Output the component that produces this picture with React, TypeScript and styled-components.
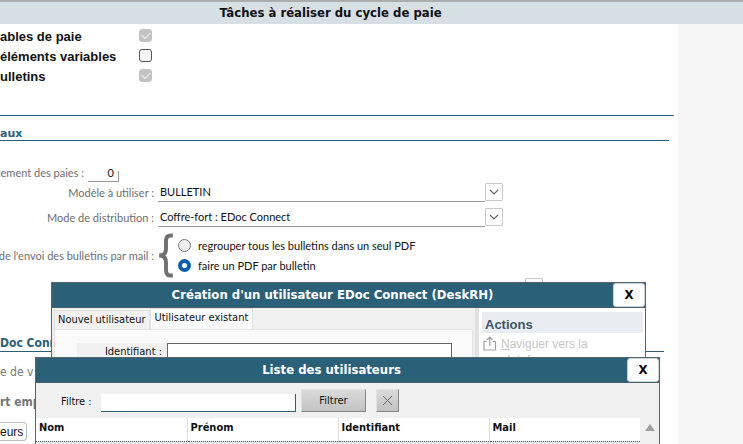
import React from 'react';
import styled, { createGlobalStyle } from 'styled-components';

const TAHOMA = '"DejaVu Sans Condensed", "Noto Sans", sans-serif';
const ARIAL = '"Liberation Sans", Arial, sans-serif';
const FORM = '"Lato", "Liberation Sans", sans-serif';
const TEAL = '#2b6079';

const GlobalStyle = createGlobalStyle`
  * { box-sizing: border-box; }
  html, body { margin: 0; overflow: hidden; background: #f5f5f5; }
  body { font: 12px/16px ${ARIAL}; color: #111; }
  button, input, select { font: inherit; color: inherit; margin: 0; padding: 0; border-radius: 0; }
`;

const Page = styled.div`
  position: relative;
  min-height: 100vh;
  overflow: hidden;
`;

const PageHeader = styled.header`
  border-top: 2px solid #aaadae;
  background: #d6dfe4;
  height: 24px;
  padding: 0 82px 0 0;
  text-align: center;
  h1 { margin: 0; font: bold 13px/22px ${TAHOMA}; }
`;

const Main = styled.main`
  display: flex;
  flex-direction: column;
  min-height: calc(100vh - 24px);
  margin-right: 65px;
  padding-top: 1px;
  background: #fff;
`;

const CheckList = styled.div`
  display: flex;
  flex-direction: column;
  padding-bottom: 30px;
`;

const CheckRow = styled.label`
  display: grid;
  grid-template-columns: 139px 13px;
  align-items: center;
  height: 20px;
  font: bold 13px/16px ${ARIAL};
  span { padding-top: 4px; }
`;

const CheckBox = styled.input`
  appearance: none;
  display: grid;
  place-items: center;
  width: 13px;
  height: 13px;
  border: 1px solid #555;
  border-radius: 3px;
  background: #f5f5f5;
  &:checked { border-color: #c2c2c2; background: #c2c2c2; }
  &:checked::after {
    content: '';
    width: 7px;
    height: 4px;
    border: solid #f4f4f4;
    border-width: 0 0 1px 1px;
    transform: rotate(-45deg);
    margin-bottom: 2px;
  }
`;

const Rule = styled.hr`
  width: calc(100% - 4px);
  height: 1px;
  margin: 0;
  border: 0;
  background: ${TEAL};
`;

const SectionTitle = styled.h2<{ $inset: number; $large?: boolean }>`
  margin: 0 ${p => p.$inset}px 0 0;
  border-bottom: 1px solid ${TEAL};
  color: ${TEAL};
  font: bold ${p => (p.$large ? '12px/16px' : '11px/12px')} ${p => (p.$large ? TAHOMA : '"DejaVu Sans", sans-serif')};
`;

const TitleBlock = styled.div`
  padding-top: 12px;
`;

const Form = styled.form`
  display: flex;
  flex-direction: column;
  padding-top: 22px;
  font: 11px/16px ${FORM};
`;

const FormRow = styled.div<{ $label: number; $height: number; $lead?: number }>`
  display: grid;
  grid-template-columns: ${p => p.$label}px minmax(0, 345px);
  column-gap: 4px;
  align-items: center;
  height: ${p => p.$height}px;
  padding-top: ${p => p.$lead ?? 0}px;
  color: #111;
`;

const FieldLabel = styled.label`
  color: #6d6d6d;
  text-align: right;
  white-space: nowrap;
  justify-self: end;
`;

const CountInput = styled.input`
  width: 31px;
  height: 19px;
  padding-right: 5px;
  border: 0;
  border-bottom: 1px solid #999;
  background: linear-gradient(#999, #999) right bottom / 1px 10px no-repeat;
  text-align: right;
`;

const Combo = styled.div`
  display: grid;
  grid-template-columns: 1fr 18px;
  align-items: start;
  height: 19px;
`;

const Select = styled.select`
  appearance: none;
  height: 19px;
  padding-left: 2px;
  border: 0;
  border-bottom: 1px solid #999;
  background: #fff;
`;

const DropButton = styled.button`
  display: grid;
  place-items: center;
  width: 18px;
  height: 18px;
  border: 1px solid #c9c9c9;
  border-radius: 1px;
  background: #fcfcfc;
`;

const RadioBlock = styled.fieldset`
  display: grid;
  grid-template-columns: 16px 1fr;
  column-gap: 4px;
  align-items: center;
  margin: 0;
  padding: 0;
  border: 0;
`;

const RadioOption = styled.label`
  display: flex;
  align-items: center;
  gap: 7px;
  height: 20px;
  white-space: nowrap;
`;

const Radio = styled.input`
  appearance: none;
  width: 13px;
  height: 13px;
  border: 1px solid #777;
  border-radius: 50%;
  background: #efefef;
  &:checked { border: 4px solid #0a5fae; background: #fff; }
`;

const PickerRow = styled.div`
  height: 57px;
  padding-left: 525px;
`;

const Details = styled.div`
  display: flex;
  flex-direction: column;
  align-items: flex-start;
  padding-top: 10px;
  gap: 10px;
  font: 12px/20px ${TAHOMA};
  color: #777;
`;

const UsersButton = styled.button`
  width: 27px;
  height: 19px;
  border: 1px solid #bbb;
  border-left: 0;
  border-radius: 0 4px 4px 0;
  background: #fff;
  color: #111;
  font: 12px/16px ${ARIAL};
  text-align: left;
`;

const Window = styled.section<{ $top: number; $left: number; $width: number }>`
  position: absolute;
  top: ${p => p.$top}px;
  bottom: 0;
  left: ${p => p.$left}px;
  display: flex;
  flex-direction: column;
  width: ${p => p.$width}px;
  border: 1px solid #59646a;
  border-bottom: 0;
  background: #f0f0f0;
  overflow: hidden;
`;

const TitleBar = styled.header`
  display: flex;
  flex: none;
  align-items: center;
  height: 25px;
  border-bottom: 1px solid #4a5e68;
  background: ${TEAL};
  color: #fff;
  h2 { flex: 1; margin: 0; text-align: center; font: bold 13px/24px ${TAHOMA}; }
`;

const CloseButton = styled.button`
  width: 32px;
  height: 24px;
  border: 1px solid #c6d5dc;
  border-radius: 3px;
  background: #fdfdfd;
  color: #000;
  font: bold 13px/20px ${TAHOMA};
`;

const CreateBody = styled.div`
  display: grid;
  grid-template-columns: minmax(0, 1fr) 4px 166px;
  flex: 1;
`;

const TabArea = styled.div`
  display: flex;
  flex-direction: column;
  padding: 0 2px;
`;

const Tabs = styled.div`
  display: flex;
  align-items: flex-end;
  height: 21px;
`;

const Tab = styled.button<{ $active?: boolean }>`
  height: ${p => (p.$active ? 21 : 19)}px;
  padding: 0 ${p => (p.$active ? 4 : 3)}px ${p => (p.$active ? 2 : 0)}px;
  border: 1px solid #e2e2e2;
  border-bottom: 0;
  background: ${p => (p.$active ? '#fafafa' : '#f1f1f1')};
  font: 11px/16px ${TAHOMA};
  white-space: nowrap;
`;

const TabPanel = styled.div`
  flex: 1;
  padding: 13px 20px 0 22px;
  border: 1px solid #e2e2e2;
  background: #fafafa;
`;

const IdentifierRow = styled.div`
  display: grid;
  grid-template-columns: 90px 1fr;
  height: 20px;
  label { padding-right: 5px; background: #f0f0f0; font: 11px/18px ${TAHOMA}; text-align: right; }
  input { min-width: 0; border: 1px solid #666; background: #fff; }
`;

const Splitter = styled.div`
  background: #e1e1e1;
`;

const ActionsPanel = styled.aside`
  padding: 4px 2px 0 3px;
  background: #fff;
  h3 { margin: 0; padding: 3px 3px 0; height: 21px; background: #e9edf1; color: #3e5565; font: bold 13px/19px ${ARIAL}; }
`;

const ActionLink = styled.a`
  display: grid;
  grid-template-columns: 14px 1fr;
  gap: 4px;
  padding: 3px 1px;
  color: #c4c4c4;
  font: 12px/16px ${ARIAL};
  text-decoration: none;
`;

const FilterRow = styled.form`
  display: flex;
  flex: none;
  align-items: center;
  height: 35px;
  padding-left: 25px;
  font: 11px/16px ${TAHOMA};
  label { width: 40px; padding-top: 3px; }
`;

const FilterInput = styled.input`
  width: 195px;
  height: 18px;
  margin: 4px 5px 0 0;
  border: 0;
  border-right: 1px solid ${TEAL};
  border-bottom: 1px solid ${TEAL};
  background: #fff;
`;

const RaisedButton = styled.button<{ $width: number }>`
  display: grid;
  place-items: center;
  width: ${p => p.$width}px;
  height: 23px;
  margin: 0 10px 0 0;
  border: 1px solid #e0e0e0;
  border-right-color: #858585;
  border-bottom-color: #858585;
  background: linear-gradient(#dadada, #c2c2c2);
  font: 11px/16px ${TAHOMA};
`;

const ListArea = styled.div`
  display: grid;
  flex: none;
  grid-template-columns: 1fr 19px;
`;

const Table = styled.table`
  width: 100%;
  table-layout: fixed;
  border-collapse: collapse;
  th {
    height: 23px;
    padding: 0 3px 2px;
    border-right: 1px solid #ddd;
    border-bottom: 1px dotted #555;
    background: #fff;
    font: bold 11px/16px ${TAHOMA};
    text-align: left;
  }
  th:last-child { border-right: 0; }
  td { height: 20px; background: #dfe6e9; }
`;

const ScrollColumn = styled.div`
  display: flex;
  justify-content: center;
  padding-top: 6px;
`;

const Chevron = () => (
  <svg width="10" height="6" viewBox="0 0 10 6" fill="none" stroke="#666" strokeWidth="1.2">
    <path d="M1 1l4 4 4-4" />
  </svg>
);

const Brace = () => (
  <svg width="16" height="45" viewBox="0 0 16 46" fill="none" stroke="#707070" strokeWidth="4">
    <path d="M15 2.500H13Q8 2.500 8 8V16Q8 23 1 23Q8 23 8 30V38Q8 43.500 13 43.500H15" />
  </svg>
);

const ShareIcon = () => (
  <svg width="14" height="15" viewBox="0 0 14 15" fill="none" stroke="#a3a3a3" strokeWidth="1.2">
    <path d="M4 5.500H1V14H12.500V5.500H9.500M6.750 10V1.500M3.800 4L6.750 1.200 9.700 4" />
  </svg>
);

const checks = [
  { label: 'ables de paie', done: true },
  { label: 'éléments variables', done: false },
  { label: 'ulletins', done: true },
];

const columns = ['Nom', 'Prénom', 'Identifiant', 'Mail'];

function ComboField({ id, label, value }: { id: string; label: string; value: string }) {
  return (
    <FormRow $label={154} $height={25}>
      <FieldLabel htmlFor={id}>{label}</FieldLabel>
      <Combo>
        <Select id={id} defaultValue={value}><option>{value}</option></Select>
        <DropButton type="button" aria-label={label}><Chevron /></DropButton>
      </Combo>
    </FormRow>
  );
}

export default function App() {
  return (
    <Page>
      <GlobalStyle />
      <PageHeader><h1>Tâches à réaliser du cycle de paie</h1></PageHeader>
      <Main>
        <CheckList>
          {checks.map(c => (
            <CheckRow key={c.label}>
              <span>{c.label}</span>
              <CheckBox type="checkbox" defaultChecked={c.done} disabled={c.done} />
            </CheckRow>
          ))}
        </CheckList>
        <Rule />
        <TitleBlock>
          <SectionTitle $inset={9}>aux</SectionTitle>
        </TitleBlock>
        <Form>
          <FormRow $label={84} $height={17}>
            <FieldLabel htmlFor="count">cement des paies :</FieldLabel>
            <CountInput id="count" defaultValue="0" />
          </FormRow>
          <ComboField id="model" label="Modèle à utiliser :" value="BULLETIN" />
          <ComboField id="mode" label="Mode de distribution :" value="Coffre-fort : EDoc Connect" />
          <FormRow $label={154} $height={48} $lead={3}>
            <FieldLabel as="span">de l'envoi des bulletins par mail :</FieldLabel>
            <RadioBlock aria-label="Envoi des bulletins par mail">
              <Brace />
              <div>
                <RadioOption><Radio type="radio" name="pdf" />regrouper tous les bulletins dans un seul PDF</RadioOption>
                <RadioOption><Radio type="radio" name="pdf" defaultChecked />faire un PDF par bulletin</RadioOption>
              </div>
            </RadioBlock>
          </FormRow>
          <PickerRow><DropButton type="button" aria-label="Choisir"><Chevron /></DropButton></PickerRow>
        </Form>
        <SectionTitle $inset={14} $large>Doc Connect</SectionTitle>
        <Details>
          <span>e de v</span>
          <strong>rt emp</strong>
          <UsersButton type="button">eurs</UsersButton>
        </Details>
      </Main>

      <Window $top={282} $left={51} $width={595}>
        <TitleBar>
          <h2>Création d'un utilisateur EDoc Connect (DeskRH)</h2>
          <CloseButton type="button">X</CloseButton>
        </TitleBar>
        <CreateBody>
          <TabArea>
            <Tabs role="tablist">
              <Tab type="button" role="tab" aria-selected={false}>Nouvel utilisateur</Tab>
              <Tab type="button" role="tab" aria-selected $active>Utilisateur existant</Tab>
            </Tabs>
            <TabPanel role="tabpanel">
              <IdentifierRow>
                <label htmlFor="identifier">Identifiant :</label>
                <input id="identifier" />
              </IdentifierRow>
            </TabPanel>
          </TabArea>
          <Splitter />
          <ActionsPanel>
            <h3>Actions</h3>
            <ActionLink href="#">
              <ShareIcon />
              <span><u>N</u>aviguer vers la<br />plateforme</span>
            </ActionLink>
          </ActionsPanel>
        </CreateBody>
      </Window>

      <Window $top={357} $left={35} $width={625}>
        <TitleBar>
          <h2>Liste des utilisateurs</h2>
          <CloseButton type="button">X</CloseButton>
        </TitleBar>
        <FilterRow>
          <label htmlFor="filter">Filtre :</label>
          <FilterInput id="filter" />
          <RaisedButton type="button" $width={65}>Filtrer</RaisedButton>
          <RaisedButton type="button" $width={23} aria-label="Effacer">
            <svg width="11" height="11" viewBox="0 0 11 11" stroke="#666"><path d="M1 1l9 9M10 1l-9 9" /></svg>
          </RaisedButton>
        </FilterRow>
        <ListArea>
          <Table>
            <thead><tr>{columns.map(c => <th key={c} scope="col">{c}</th>)}</tr></thead>
            <tbody><tr>{columns.map(c => <td key={c} />)}</tr></tbody>
          </Table>
          <ScrollColumn>
            <svg width="10" height="7" viewBox="0 0 10 7" fill="#a0a0a0"><path d="M5 0l5 7H0z" /></svg>
          </ScrollColumn>
        </ListArea>
      </Window>
    </Page>
  );
}
